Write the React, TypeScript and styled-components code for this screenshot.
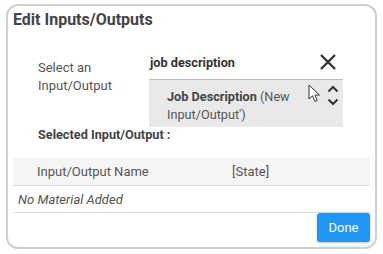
import styled, { createGlobalStyle } from 'styled-components';

const GlobalStyle = createGlobalStyle`
  html, body {
    margin: 0;
    padding: 0;
    background: #ffffff;
  }
  body {
    font-family: Roboto, 'Liberation Sans', sans-serif;
    color: #444;
  }
`;

const Dialog = styled.div`
  box-sizing: border-box;
  margin: 4px 0 0 6px;
  width: 371px;
  height: 245px;
  border: 2px solid #cfcfcf;
  border-radius: 12px;
  padding: 4px 5px 4px 5px;
  display: flex;
  flex-direction: column;
  background: #fff;
`;

const Title = styled.div`
  font-size: 16px;
  font-weight: 700;
  line-height: 20px;
  color: #444;
`;

const SelectRow = styled.div`
  margin-top: 19px;
  display: grid;
  grid-template-columns: 111px 194px;
  padding-left: 25px;
`;

const Label = styled.div`
  margin-top: 10px;
  font-size: 13px;
  line-height: 18px;
  color: #555;
  width: 80px;
`;

const SearchColumn = styled.div`
  display: flex;
  flex-direction: column;
`;

const SearchBar = styled.div`
  height: 30px;
  padding: 0 4px 4px 1px;
  box-sizing: border-box;
  display: flex;
  align-items: center;
  justify-content: space-between;
`;

const SearchText = styled.span`
  font-size: 12.7px;
  font-weight: 700;
  color: #333;
`;

const ClearButton = styled.button`
  border: none;
  background: none;
  padding: 0;
  margin-right: 2px;
  display: flex;
  cursor: pointer;
`;

const List = styled.div`
  position: relative;
  height: 48px;
  box-sizing: border-box;
  border-top: 1px solid #bdbdbd;
  background: #e9e9e9;
  display: flex;
`;

const Item = styled.div`
  flex: 1;
  padding: 8px 20px 0 18px;
  font-size: 12.7px;
  line-height: 18px;
  color: #555;
`;

const ItemName = styled.b`
  font-weight: 700;
  color: #444;
`;

const Scroller = styled.div`
  width: 16px;
  padding: 5px 2px 0 0;
  display: flex;
  flex-direction: column;
  align-items: center;
  gap: 5px;
`;

const Pointer = styled.svg`
  position: absolute;
  left: 159px;
  top: 4px;
`;

const SectionLabel = styled.div`
  padding-left: 25px;
  font-size: 12.7px;
  font-weight: 700;
  line-height: 16px;
  color: #444;
`;

const Table = styled.div`
  margin-top: 15px;
  display: flex;
  flex-direction: column;
`;

const HeaderRow = styled.div`
  height: 27px;
  background: #f5f5f5;
  border-bottom: 1px solid #dcdcdc;
  display: grid;
  grid-template-columns: 195px 1fr;
  align-items: center;
  padding-left: 24px;
  font-size: 13px;
  color: #555;
`;

const EmptyRow = styled.div`
  height: 27px;
  box-sizing: border-box;
  border-bottom: 1px solid #dcdcdc;
  display: flex;
  align-items: center;
  padding-left: 5px;
  font-size: 13px;
  font-style: italic;
  color: #555;
`;

const Footer = styled.div`
  display: flex;
  justify-content: flex-end;
`;

const DoneButton = styled.button`
  width: 53px;
  height: 29px;
  border: none;
  border-radius: 3px;
  background: #2196f3;
  color: #fff;
  font-family: Roboto, 'Liberation Sans', sans-serif;
  font-size: 13px;
  box-shadow: 0 1px 2px rgba(0, 0, 0, 0.25);
  cursor: pointer;
`;

const Chevron = ({ up }: { up?: boolean }) => (
  <svg width="12" height="8" viewBox="0 0 12 8">
    <path
      d={up ? 'M1.5 6.5 L6 2 L10.5 6.5' : 'M1.5 1.5 L6 6 L10.5 1.5'}
      fill="none"
      stroke="#333"
      strokeWidth="2"
    />
  </svg>
);

const App = () => {
  return (
    <>
      <GlobalStyle />
      <Dialog>
        <Title>Edit Inputs/Outputs</Title>
        <SelectRow>
          <Label>Select an Input/Output</Label>
          <SearchColumn>
            <SearchBar>
              <SearchText>job description</SearchText>
              <ClearButton aria-label="Clear">
                <svg width="18" height="18" viewBox="0 0 18 18">
                  <path d="M2 2 L16 16 M16 2 L2 16" stroke="#333" strokeWidth="2.4" />
                </svg>
              </ClearButton>
            </SearchBar>
            <List>
              <Item>
                <ItemName>Job Description</ItemName> (New Input/Output')
              </Item>
              <Scroller>
                <Chevron up />
                <Chevron />
              </Scroller>
              <Pointer width="13" height="19" viewBox="0 0 13 19">
                <path
                  d="M1 1 L1 15 L4.5 11.8 L7 17.5 L9.3 16.5 L6.9 11 L11.5 11 Z"
                  fill="#fff"
                  stroke="#333"
                  strokeWidth="1"
                  strokeLinejoin="round"
                />
              </Pointer>
            </List>
          </SearchColumn>
        </SelectRow>
        <SectionLabel>Selected Input/Output :</SectionLabel>
        <Table>
          <HeaderRow>
            <span>Input/Output Name</span>
            <span>[State]</span>
          </HeaderRow>
          <EmptyRow>No Material Added</EmptyRow>
        </Table>
        <Footer>
          <DoneButton>Done</DoneButton>
        </Footer>
      </Dialog>
    </>
  );
};

export default App;
